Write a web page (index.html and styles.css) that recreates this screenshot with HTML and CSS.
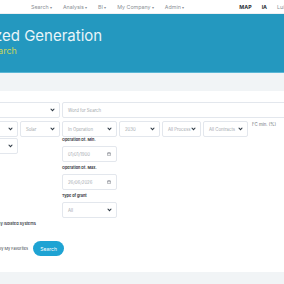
FILE: index.html
```html
<!DOCTYPE html>
<html lang="en">
<head>
<meta charset="UTF-8">
<title>Optimized Generation Search</title>
<link rel="stylesheet" href="styles.css">
</head>
<body>
    <nav class="topnav">
        <ul class="menu">
            <li>Search <span class="caret">▾</span></li>
            <li>Analysis <span class="caret">▾</span></li>
            <li>BI <span class="caret">▾</span></li>
            <li>My Company <span class="caret">▾</span></li>
            <li>Admin <span class="caret">▾</span></li>
        </ul>
        <ul class="links">
            <li class="strong">MAP</li>
            <li class="strong">IA</li>
            <li>Luis</li>
        </ul>
    </nav>

    <header class="hero">
        <h1>Optimized Generation</h1>
        <p>Search</p>
    </header>
    <div class="band"></div>

    <main class="search">
        <div class="row-one">
            <div class="field"><span>Search by Name</span><svg class="chev" viewBox="0 0 6 4"><polyline points="0.8,0.8 3,3.1 5.2,0.8"/></svg></div>
            <div class="field text"><span>Word for Search</span></div>
        </div>

        <div class="grid">
            <div class="field"><span>All Countries</span><svg class="chev" viewBox="0 0 6 4"><polyline points="0.8,0.8 3,3.1 5.2,0.8"/></svg></div>
            <div class="field"><span>Solar</span><svg class="chev" viewBox="0 0 6 4"><polyline points="0.8,0.8 3,3.1 5.2,0.8"/></svg></div>
            <div class="field"><span>In Operation</span><svg class="chev" viewBox="0 0 6 4"><polyline points="0.8,0.8 3,3.1 5.2,0.8"/></svg></div>
            <div class="field"><span>2030</span><svg class="chev" viewBox="0 0 6 4"><polyline points="0.8,0.8 3,3.1 5.2,0.8"/></svg></div>
            <div class="field"><span>All Process</span><svg class="chev" viewBox="0 0 6 4"><polyline points="0.8,0.8 3,3.1 5.2,0.8"/></svg></div>
            <div class="field"><span>All Contracts</span><svg class="chev" viewBox="0 0 6 4"><polyline points="0.8,0.8 3,3.1 5.2,0.8"/></svg></div>
            <div class="fc-label">FC min. (%)</div>

            <div class="field short"><span>All</span><svg class="chev" viewBox="0 0 6 4"><polyline points="0.8,0.8 3,3.1 5.2,0.8"/></svg></div>
            <div class="stack">
                <label>Operation Dt. Min.</label>
                <div class="field date"><span>01/01/1900</span><svg class="cal" viewBox="0 0 6 6"><rect x="0.6" y="1.2" width="4.8" height="4.2" rx="0.6"/><line x1="0.6" y1="2.6" x2="5.4" y2="2.6"/><line x1="2" y1="0.4" x2="2" y2="1.6"/><line x1="4" y1="0.4" x2="4" y2="1.6"/></svg></div>
                <label>Operation Dt. Max.</label>
                <div class="field date"><span>26/06/2026</span><svg class="cal" viewBox="0 0 6 6"><rect x="0.6" y="1.2" width="4.8" height="4.2" rx="0.6"/><line x1="0.6" y1="2.6" x2="5.4" y2="2.6"/><line x1="2" y1="0.4" x2="2" y2="1.6"/><line x1="4" y1="0.4" x2="4" y2="1.6"/></svg></div>
                <label>Type of grant</label>
                <div class="field"><span>All</span><svg class="chev" viewBox="0 0 6 4"><polyline points="0.8,0.8 3,3.1 5.2,0.8"/></svg></div>
            </div>
        </div>

        <div class="check bold"><span class="box"></span>Only Isolated Systems</div>

        <div class="actions">
            <div class="check"><span class="box"></span>Only My Favorites</div>
            <button type="button">Search</button>
        </div>
    </main>

    <footer class="foot"></footer>
</body>
</html>
```

FILE: styles.css
```css
body {
    margin: 0;
    height: 284px;
    overflow: hidden;
    background: white;
    font-family: Inter, "Liberation Sans", sans-serif;
}

ul {
    list-style: none;
    margin: 0;
    padding: 0;
    display: flex;
}

.topnav {
    height: 13px;
    display: flex;
    align-items: center;
    padding-left: 31px;
    font-size: 5.3px;
    color: #8b9096;
    white-space: nowrap;
    border-bottom: 1px solid #eef0f2;
}

.menu {
    gap: 10.8px;
}

.caret {
    font-size: 4px;
}

.links {
    margin-left: 55px;
    gap: 10px;
}

.links .strong {
    font-weight: 700;
    color: #2d3338;
}

.hero {
    height: 59px;
    box-sizing: border-box;
    padding-top: 13px;
    background: #2498bf;
    border-bottom: 1px solid #5ab6d5;
    white-space: nowrap;
}

.hero h1 {
    margin: 0 0 0 -52px;
    font-size: 15px;
    font-weight: 400;
    line-height: 17px;
    color: #e9f5f9;
}

.hero p {
    margin: 1px 0 0 -13px;
    font-size: 9px;
    line-height: 11px;
    color: #c8d55b;
}

.band {
    height: 18px;
    background: #f1f4f6;
}

.search {
    margin-left: -42px;
    padding-top: 11px;
    height: 181px;
    box-sizing: border-box;
    white-space: nowrap;
}

.field {
    height: 16px;
    box-sizing: border-box;
    border: 1px solid #e3e7ed;
    border-radius: 2px;
    display: flex;
    align-items: center;
    justify-content: space-between;
    padding: 0 4px 0 5px;
    font-size: 4.3px;
    color: #a3a8ae;
    background: white;
}

.chev {
    width: 5px;
    height: 3.5px;
    fill: none;
    stroke: #2f3a45;
    stroke-width: 1.3;
}

.cal {
    width: 4px;
    height: 4px;
    fill: none;
    stroke: #6b7178;
    stroke-width: 0.7;
}

.row-one {
    display: grid;
    grid-template-columns: 102px 260px;
    gap: 2px;
}

.grid {
    margin-top: 3px;
    display: grid;
    grid-template-columns: 60px 40px 55px 41px 39px 45px 40px;
    column-gap: 2px;
    row-gap: 1px;
    align-items: start;
}

.fc-label {
    font-size: 4.3px;
    color: #6b7178;
    padding: 1px 0 0 2px;
}

.short {
    grid-column: 1;
}

.stack {
    grid-column: 3;
    display: flex;
    flex-direction: column;
}

.stack label {
    font-size: 3.8px;
    font-weight: 700;
    color: #3a4047;
    margin: 0 0 4px;
    line-height: 4px;
}

.stack .field {
    margin-bottom: 4px;
}

.stack .date {
    padding-right: 5px;
}

.check {
    display: flex;
    align-items: center;
    gap: 3px;
    font-size: 3.9px;
    color: #3a4047;
}

.check.bold {
    font-weight: 600;
    margin: -2px 0 0 26px;
}

.box {
    width: 5px;
    height: 5px;
    border: 1px solid #c9ced4;
    border-radius: 1px;
}

.actions {
    margin: 14px 0 0 27px;
    display: flex;
    align-items: center;
    gap: 5px;
}

button {
    width: 31px;
    height: 15px;
    border: none;
    border-radius: 8px;
    background: #1ea3d3;
    color: white;
    font-family: Inter, "Liberation Sans", sans-serif;
    font-size: 5px;
    padding: 0;
}

.foot {
    height: 14px;
    background: #f1f4f6;
}
```
